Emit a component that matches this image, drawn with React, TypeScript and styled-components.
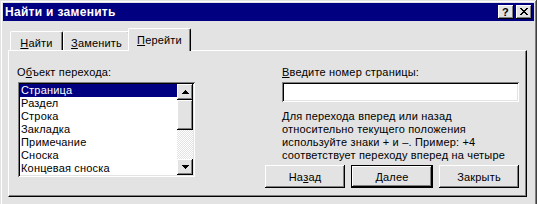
import React from "react";
import styled, { createGlobalStyle, css } from "styled-components";

const FACE = "#e3e3e3";
const LIGHT = "#ffffff";
const SHADOW = "#808080";
const DARK = "#000000";
const NAVY = "#000080";

const raised = css`
  box-shadow: inset -1px -1px ${DARK}, inset 1px 1px ${LIGHT},
    inset -2px -2px ${SHADOW}, inset 2px 2px ${FACE};
`;

const sunken = css`
  box-shadow: inset 1px 1px ${SHADOW}, inset -1px -1px ${LIGHT},
    inset 2px 2px ${DARK}, inset -2px -2px ${FACE};
`;

const GlobalStyle = createGlobalStyle`
  html, body { margin: 0; padding: 0; background: ${FACE}; overflow: hidden; }
  body {
    font-family: "Liberation Sans", Arial, sans-serif;
    font-size: 11px;
    letter-spacing: 0.18px;
    color: #000;
  }
  #root { width: 537px; height: 204px; overflow: hidden; }
`;

const Window = styled.div`
  box-sizing: border-box;
  width: 537px;
  height: 216px;
  padding: 3px;
  background: ${FACE};
  box-shadow: inset -1px -1px #404040, inset 1px 1px ${FACE},
    inset -2px -2px ${SHADOW}, inset 2px 2px ${LIGHT};
  display: flex;
  flex-direction: column;
`;

const TitleBar = styled.div`
  height: 18px;
  flex: none;
  background: ${NAVY};
  display: flex;
  align-items: center;
  padding: 0 2px;
  color: #fff;
`;

const Title = styled.span`
  font-weight: bold;
  font-size: 12px;
  letter-spacing: 0.3px;
  white-space: nowrap;
`;

const CaptionButtons = styled.div`
  margin-left: auto;
  display: flex;
  gap: 2px;
`;

const CaptionButton = styled.div`
  box-sizing: border-box;
  width: 16px;
  height: 14px;
  background: ${FACE};
  ${raised};
  display: flex;
  align-items: center;
  justify-content: center;
  color: #000;
  font-weight: bold;
  font-size: 11px;
  line-height: 14px;
  padding: 0 1px 1px 0;
`;

const TabArea = styled.div`
  margin: 7px 7px 0 5px;
  display: flex;
  flex-direction: column;
`;

const TabRow = styled.div`
  display: flex;
  align-items: flex-end;
  height: 22px;
  padding-left: 2px;
  position: relative;
  z-index: 2;
`;

const Tab = styled.div<{ $w: number; $active?: boolean }>`
  box-sizing: border-box;
  width: ${(p) => p.$w}px;
  height: ${(p) => (p.$active ? 23 : 19)}px;
  margin: ${(p) => (p.$active ? "0 -2px -1px -2px" : "0")};
  background: ${FACE};
  border-top: 1px solid ${LIGHT};
  border-left: 1px solid ${LIGHT};
  border-right: 1px solid ${DARK};
  box-shadow: inset -1px 0 ${SHADOW};
  border-top-left-radius: 2px;
  border-top-right-radius: 2px;
  text-align: center;
  padding-top: 5px;
  line-height: 13px;
  white-space: nowrap;
  position: relative;
  z-index: ${(p) => (p.$active ? 2 : 1)};
`;

const Panel = styled.div`
  box-sizing: border-box;
  height: 147px;
  position: relative;
  z-index: 1;
  border-top: 1px solid ${LIGHT};
  border-left: 1px solid ${LIGHT};
  border-right: 1px solid ${DARK};
  border-bottom: 1px solid ${DARK};
  box-shadow: inset -1px -1px ${SHADOW};
  padding: 15px 0 0 8px;
  display: grid;
  grid-template-columns: 179px 254px;
  column-gap: 69px;
  align-items: start;
`;

const Column = styled.div`
  display: flex;
  flex-direction: column;
`;

const FieldLabel = styled.div<{ $indent?: number }>`
  line-height: 13px;
  height: 13px;
  white-space: nowrap;
  padding-left: ${(p) => p.$indent ?? 0}px;
`;

const ListBox = styled.div`
  box-sizing: border-box;
  margin: 3px 0 0 1px;
  width: 177px;
  height: 95px;
  padding: 2px;
  background: #fff;
  ${sunken};
  display: flex;
`;

const Items = styled.div`
  flex: 1;
  display: flex;
  flex-direction: column;
  overflow: hidden;
`;

const Item = styled.div<{ $selected?: boolean }>`
  height: 13px;
  line-height: 13px;
  padding-left: 1px;
  white-space: nowrap;
  background: ${(p) => (p.$selected ? NAVY : "transparent")};
  color: ${(p) => (p.$selected ? "#fff" : "#000")};
`;

const ScrollBar = styled.div`
  width: 16px;
  display: flex;
  flex-direction: column;
`;

const ScrollButton = styled.div`
  box-sizing: border-box;
  width: 16px;
  height: 16px;
  flex: none;
  background: ${FACE};
  ${raised};
  display: flex;
  align-items: center;
  justify-content: center;
`;

const Thumb = styled.div`
  box-sizing: border-box;
  width: 16px;
  height: 30px;
  flex: none;
  background: ${FACE};
  ${raised};
`;

const Track = styled.div`
  flex: 1;
  background-image: conic-gradient(
    ${LIGHT} 25%,
    ${FACE} 0 50%,
    ${LIGHT} 0 75%,
    ${FACE} 0
  );
  background-size: 2px 2px;
`;

const TextInput = styled.div`
  box-sizing: border-box;
  margin: 3px 0 0 17px;
  height: 20px;
  background: #fff;
  ${sunken};
`;

const Description = styled.div`
  margin-top: 8px;
  padding-left: 17px;
  line-height: 13px;
  white-space: nowrap;
`;

const ButtonRow = styled.div`
  margin-top: 3px;
  display: flex;
  gap: 6px;
`;

const Button = styled.div<{ $default?: boolean }>`
  box-sizing: border-box;
  width: ${(p) => (p.$default ? 82 : 80)}px;
  height: 23px;
  background: ${FACE};
  display: flex;
  align-items: center;
  justify-content: center;
  white-space: nowrap;
  ${(p) =>
    p.$default
      ? css`
          border: 1px solid ${DARK};
          ${raised};
        `
      : raised};
`;

const Arrow = ({ up }: { up?: boolean }) => (
  <svg width="7" height="4" viewBox="0 0 7 4" shapeRendering="crispEdges">
    {up ? (
      <path d="M3 0h1v1h1v1h1v1h1v1H0V3h1V2h1V1h1z" fill="#000" />
    ) : (
      <path d="M0 0h7v1H6v1H5v1H4v1H3V3H2V2H1V1H0z" fill="#000" />
    )}
  </svg>
);

const CloseGlyph = () => (
  <svg width="8" height="7" viewBox="0 0 8 7" shapeRendering="crispEdges">
    <path
      d="M0 0h2v1h1v1h2V1h1V0h2v1H7v1H6v1H5v1h1v1h1v1h1v1H6V6H5V5H3v1H2v1H0V6h1V5h1V4h1V3H2V2H1V1H0z"
      fill="#000"
    />
  </svg>
);

const items = [
  "Страница",
  "Раздел",
  "Строка",
  "Закладка",
  "Примечание",
  "Сноска",
  "Концевая сноска",
];

export default function App() {
  return (
    <>
      <GlobalStyle />
      <Window>
        <TitleBar>
          <Title>Найти и заменить</Title>
          <CaptionButtons>
            <CaptionButton>?</CaptionButton>
            <CaptionButton>
              <CloseGlyph />
            </CaptionButton>
          </CaptionButtons>
        </TitleBar>
        <TabArea>
          <TabRow>
            <Tab $w={53}>
              <u>Н</u>айти
            </Tab>
            <Tab $w={67}>
              <u>З</u>аменить
            </Tab>
            <Tab $w={63} $active>
              <u>П</u>ерейти
            </Tab>
          </TabRow>
          <Panel>
            <Column>
              <FieldLabel>
                О<u>б</u>ъект перехода:
              </FieldLabel>
              <ListBox>
                <Items>
                  {items.map((it, i) => (
                    <Item key={it} $selected={i === 0}>
                      {it}
                    </Item>
                  ))}
                </Items>
                <ScrollBar>
                  <ScrollButton>
                    <Arrow up />
                  </ScrollButton>
                  <Thumb />
                  <Track />
                  <ScrollButton>
                    <Arrow />
                  </ScrollButton>
                </ScrollBar>
              </ListBox>
            </Column>
            <Column>
              <FieldLabel $indent={17}>
                <u>В</u>ведите номер страницы:
              </FieldLabel>
              <TextInput />
              <Description>
                <div>Для перехода вперед или назад</div>
                <div>относительно текущего положения</div>
                <div>используйте знаки + и –. Пример: +4</div>
                <div>соответствует переходу вперед на четыре</div>
              </Description>
              <ButtonRow>
                <Button>
                  На<u>з</u>ад
                </Button>
                <Button $default>
                  <u>Д</u>алее
                </Button>
                <Button>Закрыть</Button>
              </ButtonRow>
            </Column>
          </Panel>
        </TabArea>
      </Window>
    </>
  );
}
